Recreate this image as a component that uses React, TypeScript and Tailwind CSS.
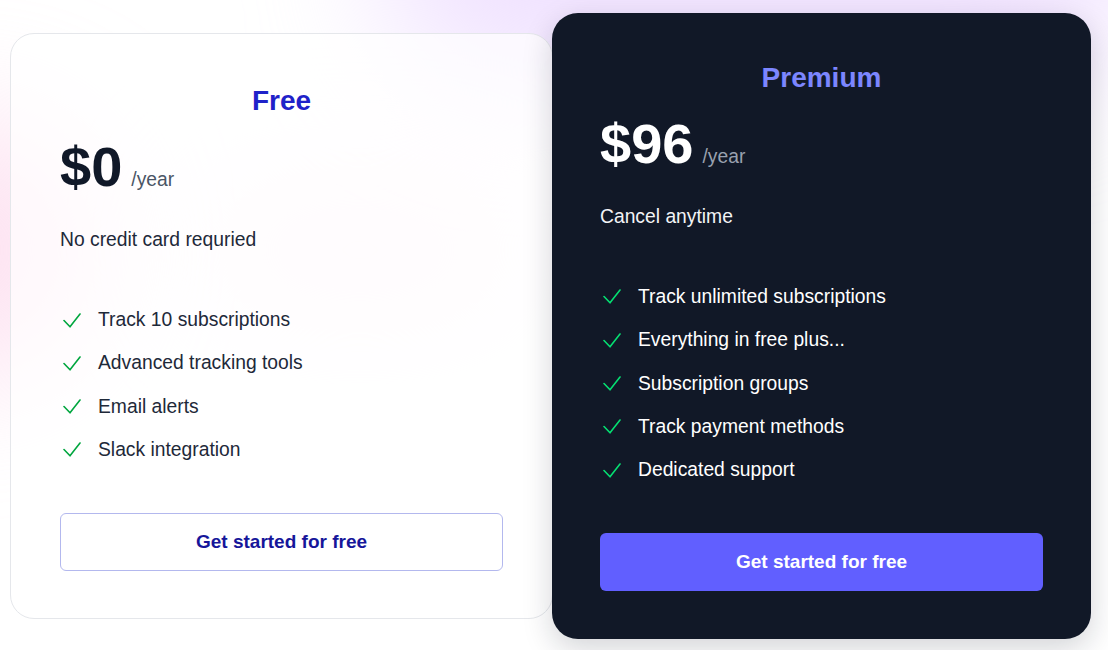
import React from 'react';

type Plan = {
  name: string;
  price: string;
  note: string;
  features: string[];
  cta: string;
  dark?: boolean;
};

const plans: Plan[] = [
  {
    name: 'Free',
    price: '$0',
    note: 'No credit card requried',
    features: ['Track 10 subscriptions', 'Advanced tracking tools', 'Email alerts', 'Slack integration'],
    cta: 'Get started for free',
  },
  {
    name: 'Premium',
    price: '$96',
    note: 'Cancel anytime',
    features: [
      'Track unlimited subscriptions',
      'Everything in free plus...',
      'Subscription groups',
      'Track payment methods',
      'Dedicated support',
    ],
    cta: 'Get started for free',
    dark: true,
  },
];

function CheckMark({ dark }: { dark?: boolean }) {
  return (
    <svg
      width="18"
      height="15"
      viewBox="0 0 18 15"
      fill="none"
      className={`ml-[3px] shrink-0 ${dark ? 'text-green-400' : 'text-green-600'}`}
    >
      <path d="M1 7.5 L7 13.8 L17 1" stroke="currentColor" strokeWidth="1.6" strokeLinecap="round" strokeLinejoin="round" />
    </svg>
  );
}

function PlanCard({ plan }: { plan: Plan }) {
  const dark = plan.dark;
  return (
    <div
      className={
        dark
          ? 'relative z-10 -ml-px w-[539px] rounded-[26px] bg-[#111827] px-[48px] pt-[47px] pb-[48px] shadow-[0_10px_30px_rgba(17,24,39,0.18)]'
          : 'relative w-[543px] rounded-3xl border border-gray-200 bg-white/70 pl-[49px] pr-[49px] pt-[49px] pb-[47px]'
      }
    >
      <h3
        className={`text-center text-[28px] font-bold leading-[36px] ${dark ? 'text-indigo-400' : 'text-[#1f22c9]'}`}
      >
        {plan.name}
      </h3>

      <div className="mt-5 flex items-baseline gap-[9px]">
        <span className={`text-[56px] font-bold leading-none ${dark ? 'text-white' : 'text-gray-900'}`}>{plan.price}</span>
        <span className={`text-[19.3px] ${dark ? 'text-gray-400' : 'text-gray-600'}`}>/year</span>
      </div>

      <p className={`mt-[31px] text-[19.3px] leading-[28px] ${dark ? 'text-gray-100' : 'text-gray-800'}`}>{plan.note}</p>

      <ul className="mt-[52px] flex flex-col gap-[15.3px]">
        {plan.features.map((f) => (
          <li key={f} className="flex items-center gap-[17px]">
            <CheckMark dark={dark} />
            <span className={`text-[19.3px] leading-[28px] ${dark ? 'text-white' : 'text-gray-800'}`}>{f}</span>
          </li>
        ))}
      </ul>

      <button
        className={
          dark
            ? 'mt-[49px] flex h-[58px] w-full items-center justify-center rounded-md bg-indigo-500 text-[19px] font-bold text-white'
            : 'mt-[49px] flex h-[58px] w-full items-center justify-center rounded-md border border-[#b3b8ee] bg-white text-[19px] font-bold text-[#16169a]'
        }
      >
        {plan.cta}
      </button>
    </div>
  );
}

export default function App() {
  return (
    <div className="relative h-[650px] w-full overflow-hidden bg-white font-['Liberation_Sans',Arial,sans-serif]">
      {/* soft background glow */}
      <div className="pointer-events-none absolute -top-[170px] left-[380px] h-[260px] w-[760px] rounded-full bg-purple-200/70 blur-3xl" />
      <div className="pointer-events-none absolute top-[120px] -left-[160px] h-[260px] w-[260px] rounded-full bg-pink-200/60 blur-3xl" />
      <div className="pointer-events-none absolute top-[180px] left-[200px] h-[140px] w-[320px] rounded-full bg-pink-100/60 blur-3xl" />

      <div className="relative flex h-full items-center pl-[10px] pr-[17px] pt-[2px]">
        {plans.map((p) => (
          <PlanCard key={p.name} plan={p} />
        ))}
      </div>
    </div>
  );
}
